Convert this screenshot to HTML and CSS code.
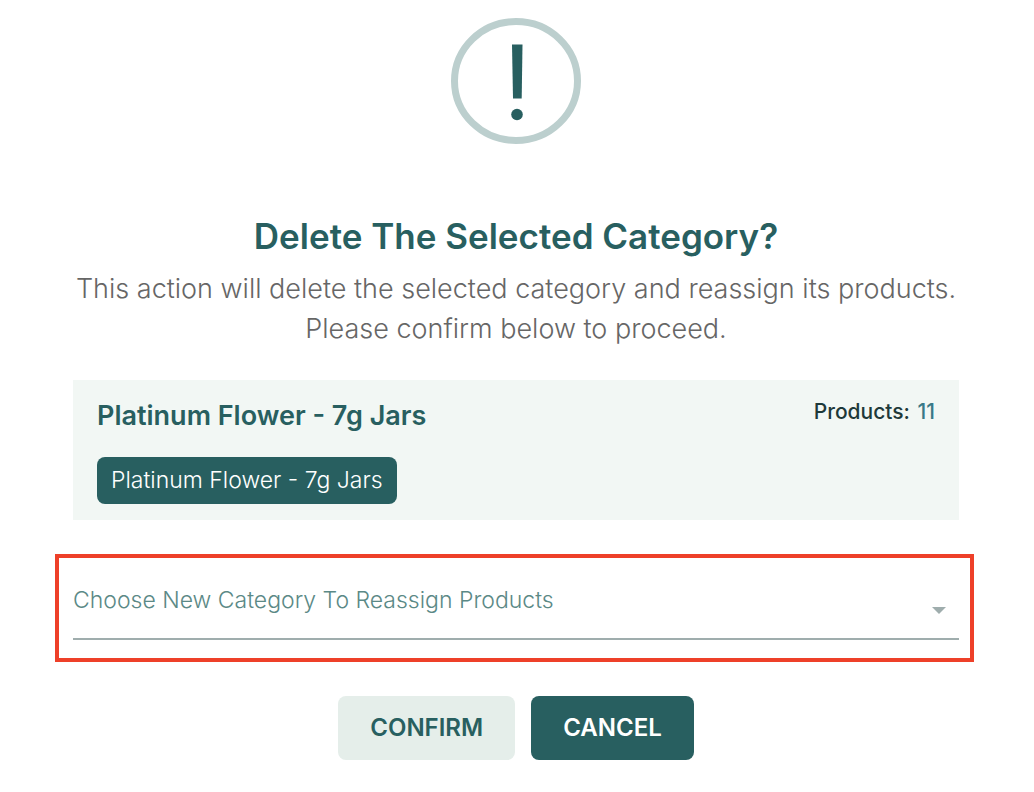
FILE: index.html
```html
<!DOCTYPE html>
<html lang="en">
<head>
<meta charset="utf-8">
<meta name="viewport" content="width=device-width, initial-scale=1">
<title>Delete Category</title>
<link rel="stylesheet" href="styles.css">
</head>
<body>
<main class="dialog">
  <svg class="alert-icon" viewBox="0 0 130 128" aria-hidden="true">
    <ellipse cx="65" cy="64" rx="61.5" ry="59.5" fill="none" stroke="#bccfce" stroke-width="7"/>
    <path d="M61 27.500H71.500L70.700 81.500H62Z" fill="#285f60"/>
    <circle cx="66" cy="97.500" r="5.800" fill="#285f60"/>
  </svg>
  <h1 class="title">Delete The Selected Category?</h1>
  <p class="message">This action will delete the selected category and reassign its products. Please confirm below to proceed.</p>
  <section class="category">
    <div class="category-head">
      <h2 class="category-name">Platinum Flower - 7g Jars</h2>
      <p class="count">Products: <span class="count-value">11</span></p>
    </div>
    <span class="chip">Platinum Flower - 7g Jars</span>
  </section>
  <div class="highlight">
    <div class="field">
      <select class="select" aria-label="Choose New Category To Reassign Products">
        <option>Choose New Category To Reassign Products</option>
      </select>
      <svg class="caret" viewBox="0 0 14 7" aria-hidden="true"><path d="M0 0H14L7 7Z" fill="#9fadad"/></svg>
    </div>
  </div>
  <div class="actions">
    <button class="button button-light" type="button">CONFIRM</button>
    <button class="button button-dark" type="button">CANCEL</button>
  </div>
</main>
</body>
</html>
```

FILE: styles.css
```css
* { box-sizing: border-box; }
body {
  margin: 0;
  background: #fff;
  color: #285f60;
  font-family: Inter, Lato, sans-serif;
}
h1, h2, p { margin: 0; }
.dialog {
  display: flex;
  flex-direction: column;
  align-items: center;
  padding: 17px 60px 32px 55px;
}
.alert-icon, .title, .message, .actions { margin-left: 3px; }
.alert-icon { width: 130px; height: 128px; }
.title {
  margin-top: 67px;
  font-size: 35px;
  line-height: 48px;
  font-weight: 600;
  text-align: center;
}
.message {
  max-width: 900px;
  margin-top: 9px;
  color: #666;
  font-size: 27px;
  font-weight: 300;
  line-height: 40px;
  text-align: center;
}
.category {
  align-self: stretch;
  margin: 31px 15px 0 18px;
  padding: 16px 24px;
  background: #f2f7f4;
}
.category-head {
  display: flex;
  justify-content: space-between;
  align-items: flex-start;
}
.category-name { font-size: 27px; line-height: 40px; font-weight: 600; }
.count { color: #1e3939; font-size: 21px; line-height: 32px; font-weight: 500; }
.count-value { margin-left: 2px; color: #397988; }
.chip {
  display: inline-block;
  margin-top: 21px;
  padding: 0 14px;
  border-radius: 8px;
  background: #285f60;
  color: #fff;
  font-size: 23px;
  font-weight: 300;
  line-height: 47px;
  vertical-align: top;
}
.highlight {
  align-self: stretch;
  margin-top: 34px;
  padding: 16px 11px 18px 14px;
  border: 4px solid #ee4029;
}
.field { position: relative; border-bottom: 2px solid #9fadad; }
.select {
  display: block;
  width: 100%;
  height: 64px;
  padding: 0 40px 12px 0;
  border: 0;
  background: transparent;
  color: #5b8986;
  font: 300 23px/32px Inter, Lato, sans-serif;
  appearance: none;
}
.caret { position: absolute; right: 13px; top: 33px; width: 14px; height: 7px; pointer-events: none; }
.actions { display: flex; gap: 16px; margin-top: 34px; }
.button {
  height: 64px;
  padding: 0 32px;
  border: 0;
  border-radius: 8px;
  font: 600 24px/32px Inter, Lato, sans-serif;
}
.button-light { background: #e5eeea; color: #285f60; }
.button-dark { background: #285f60; color: #fff; }
```
